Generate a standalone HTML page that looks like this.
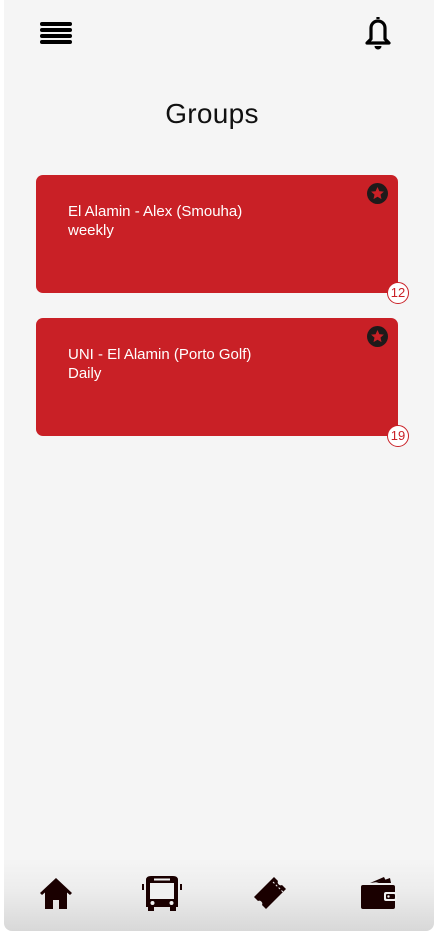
<!DOCTYPE html>
<html><head><style>
html,body{margin:0;padding:0;width:438px;height:936px;background:#fff;overflow:hidden;font-family:"Liberation Sans",sans-serif}
.app{position:absolute;left:4px;top:0;width:430px;height:931px;background:#f5f5f5;border-radius:0 0 8px 8px;overflow:hidden}
.title{position:absolute;left:0;width:416px;top:98px;text-align:center;font-size:28px;color:#111;letter-spacing:.3px}
.card{position:absolute;left:32px;width:362px;height:118px;background:#c92026;border-radius:7px;color:#fff;font-size:15px;line-height:19px}
.card .t{position:absolute;left:32px;top:27px}
.star{position:absolute;right:10px;top:8px;width:21px;height:21px;border-radius:50%;background:#1e1a1a}
.badge{position:absolute;right:-11px;bottom:-11px;width:20px;height:20px;border-radius:50%;background:#fff;border:1px solid #c92026;color:#c92026;font-size:13px;line-height:20px;text-align:center}
.nav{position:absolute;left:0;bottom:0;width:430px;height:72px;background:linear-gradient(#f5f5f5,#ececec 45%,#d8d8d8)}
.nav svg{position:absolute;top:16px}
</style></head><body>
<div class="app">
<svg style="position:absolute;left:36px;top:21px" width="32" height="24" viewBox="0 0 32 24"><g stroke="#000" stroke-width="4" stroke-linecap="round"><line x1="2" y1="3" x2="30" y2="3"/><line x1="2" y1="9" x2="30" y2="9"/><line x1="2" y1="15" x2="30" y2="15"/><line x1="2" y1="21" x2="30" y2="21"/></g></svg>
<svg style="position:absolute;left:358px;top:14px" width="32" height="36" viewBox="0 0 32 36"><path d="M16 3v2M9 25V14a7 7 0 0 1 14 0v11l4 4H5z" fill="none" stroke="#000" stroke-width="3.2" stroke-linejoin="round"/><path d="M12.5 32h7a3.5 3.5 0 0 1-7 0z" fill="#000"/></svg>
<div class="title">Groups</div>
<div class="card" style="top:175px"><div class="t">El Alamin - Alex (Smouha)<br>weekly</div><div class="star"><svg width="21" height="21" viewBox="0 0 21 21"><path d="M10.5 4l1.9 4.2 4.5.4-3.4 3 1 4.5-4-2.4-4 2.4 1-4.5-3.4-3 4.5-.4z" fill="#c92026"/></svg></div><div class="badge">12</div></div>
<div class="card" style="top:318px"><div class="t">UNI - El Alamin (Porto Golf)<br>Daily</div><div class="star"><svg width="21" height="21" viewBox="0 0 21 21"><path d="M10.5 4l1.9 4.2 4.5.4-3.4 3 1 4.5-4-2.4-4 2.4 1-4.5-3.4-3 4.5-.4z" fill="#c92026"/></svg></div><div class="badge">19</div></div>
<div class="nav">
<svg style="left:34px" width="36" height="36" viewBox="0 0 36 36"><path d="M18 3L2 18l2 2 3-2.5V34h8v-9h6v9h8V17.5l3 2.5 2-2z" fill="#1a0000"/></svg>
<svg style="left:136px" width="44" height="38" viewBox="0 0 44 38"><path d="M6 5q0-4 5-4h22q5 0 5 4v27h-2v4h-6v-4H14v4H8v-4H6z" fill="#1a0000"/><rect x="10" y="8" width="24" height="16" fill="#f0f0f0"/><rect x="14" y="3.5" width="16" height="2" fill="#f0f0f0"/><circle cx="12.5" cy="28" r="2" fill="#f0f0f0"/><circle cx="31.5" cy="28" r="2" fill="#f0f0f0"/><path d="M3 9v6M41 9v6" stroke="#1a0000" stroke-width="2"/></svg>
<svg style="left:248px" width="38" height="38" viewBox="0 0 38 38"><path d="M22 2l4 4a3 3 0 0 0 4 4l4 4L14 34l-4-4a3 3 0 0 0-4-4l-4-4z" fill="#1a0000"/><path d="M21 7l10 10" stroke="#f0f0f0" stroke-width="1" stroke-dasharray="2 2"/></svg>
<svg style="left:356px" width="38" height="38" viewBox="0 0 38 38"><path d="M10 8l14-6 2 4z" fill="#1a0000"/><path d="M16 8l14-5 1 5z" fill="#1a0000"/><rect x="1" y="10" width="34" height="24" rx="2" fill="#1a0000"/><rect x="24" y="17" width="13" height="9" rx="2" fill="#f0f0f0"/><rect x="26" y="19" width="9" height="5" rx="1" fill="#1a0000"/><circle cx="28.5" cy="21.5" r="1.2" fill="#f0f0f0"/></svg>
</div>
</div>
</body></html>
